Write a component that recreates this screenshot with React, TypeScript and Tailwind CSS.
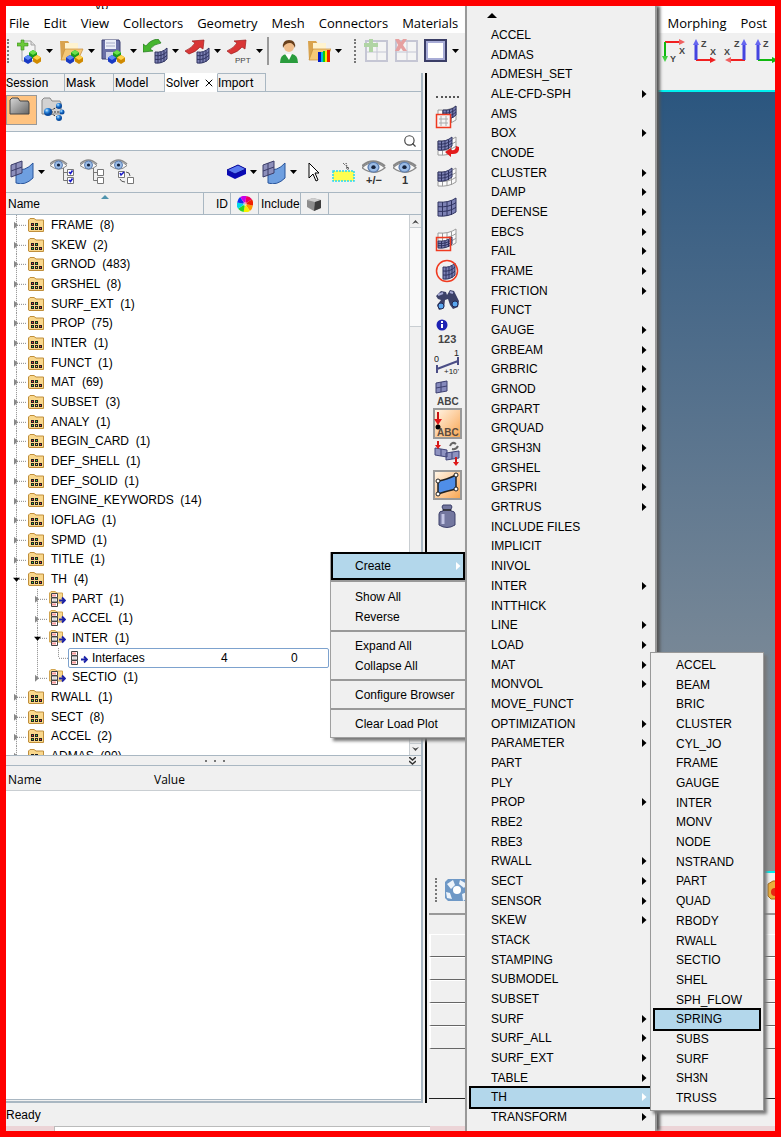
import React from "react";
import { Search, X } from "lucide-react";

type Kids = { children?: React.ReactNode };

/* ---------- shared drawing pieces ---------- */

function Svg({ w = 24, h = 24, children }: { w?: number; h?: number } & Kids) {
  return (
    <svg width={w} height={h} viewBox={`0 0 ${w} ${h}`} className="block shrink-0" aria-hidden="true">
      {children}
    </svg>
  );
}

function Caret() {
  return (
    <Svg w={7} h={4}>
      <path d="M0 0h7L3.5 4z" fill="#000" />
    </Svg>
  );
}

function Cube({ x, y, top, side }: { x: number; y: number; top: string; side: string }) {
  return (
    <g transform={`translate(${x} ${y})`}>
      <path d="M0 2.5 4 0l4 2.5v4L4 9 0 6.5z" fill={side} />
      <path d="M0 2.5 4 0l4 2.5L4 5z" fill={top} />
    </g>
  );
}

function Cubes() {
  return (
    <g>
      <Cube x={12} y={11} top="#6be04c" side="#1b9a1b" />
      <Cube x={7} y={16} top="#5f8cf5" side="#1839c4" />
      <Cube x={16} y={16} top="#ffd34a" side="#d08a00" />
    </g>
  );
}

function Mesh({ x = 0, y = 0, w = 18, h = 14, fill = "#7c81b4", line = "#2f3360" }: { x?: number; y?: number; w?: number; h?: number; fill?: string; line?: string }) {
  const d = (r: number) => `M0 ${4 + r} Q${w * 0.6} ${5 + r} ${w} ${r}`;
  return (
    <g transform={`translate(${x} ${y})`} stroke={line} strokeWidth="1" fill="none">
      <path d={`M0 4Q${w * 0.6} 5 ${w} 0V${h}Q${w * 0.6} ${h + 5} 0 ${h + 4}z`} fill={fill} />
      <path d={d(h / 3)} />
      <path d={d((2 * h) / 3)} />
      <path d={`M${w * 0.25} 4v${h}M${w * 0.5} 4v${h}M${w * 0.75} 3v${h}`} />
    </g>
  );
}

function Folder({ rainbow }: { rainbow?: boolean }) {
  return (
    <g>
      <path d="M1 2h8l2 3h8v16H2z" fill="#d9a34e" />
      <path d="M6 4h13v8H6z" fill="#fff3cf" />
      <path d="M2 21 6 10h18l-5 11z" fill="#f5c877" stroke="#c58d3a" strokeWidth=".7" />
      {rainbow && (
        <g>
          <path d="M11 13h3v10h-3z" fill="#0018c8" />
          <path d="M14 13h2v10h-2z" fill="#00b8e8" />
          <path d="M16 12h2v11h-2z" fill="#12c812" />
          <path d="M18 12h2v11h-2z" fill="#f6ee00" />
          <path d="M20 11h3v12h-3z" fill="#ee2200" />
        </g>
      )}
    </g>
  );
}

function NewIcon() {
  return (
    <Svg w={25} h={25}>
      <path d="M5 2h9l4 4v16H5z" fill="#f4f4f4" stroke="#a5a5a5" />
      <path d="M14 2v4h4" fill="#ddd" stroke="#a5a5a5" />
      <path d="M4 1h3v3h4v3H7v4H4V7H0V4h4z" fill="#6bc93a" stroke="#3a8c1d" strokeWidth=".6" />
      <Cubes />
    </Svg>
  );
}
function OpenIcon() {
  return (
    <Svg w={25} h={25}>
      <Folder />
      <Cubes />
    </Svg>
  );
}
function SaveIcon() {
  return (
    <Svg w={25} h={25}>
      <path d="M1 1h17l1 2v17H1z" fill="#6a6fa6" stroke="#3c4073" />
      <path d="M4 1h11v9H4z" fill="#eceef8" />
      <path d="M5 13h8v7H5z" fill="#cfd2e6" />
      <path d="M5 4h9M5 7h9" stroke="#a8acc9" />
      <Cubes />
    </Svg>
  );
}
function ImportIcon() {
  return (
    <Svg w={25} h={25}>
      <path d="M0 13V5l3 2Q7 1 15 0l3 4Q11 5 7 10l3 2z" fill="#45b52e" stroke="#20761a" strokeWidth=".7" />
      <Mesh x={12} y={9} w={12} h={11} />
    </Svg>
  );
}
function ExportIcon({ ppt }: { ppt?: boolean }) {
  return (
    <Svg w={25} h={25}>
      <path d="M0 12Q7 9 10 4L7 2l12-1-1 9-3-2Q11 13 4 15z" fill="#d93636" stroke="#9e1c1c" strokeWidth=".7" />
      {ppt ? (
        <text x="8" y="24" fontSize="8" fill="#444" className="font-['Liberation_Sans',sans-serif]">PPT</text>
      ) : (
        <Mesh x={12} y={9} w={12} h={11} />
      )}
    </Svg>
  );
}
function UserIcon() {
  return (
    <Svg w={20} h={25}>
      <path d="M1 24q0-8 6-9h6q6 1 6 9z" fill="#2a9c3d" />
      <path d="m6 15 4 6 3-6z" fill="#fff" />
      <circle cx="10" cy="8" r="5" fill="#f0bd8b" />
      <path d="M4 9Q3 1 10 1t6 8q-2-5-5-5-5 0-7 5z" fill="#69401c" />
    </Svg>
  );
}
function GridIcon({ kind }: { kind: "add" | "del" }) {
  return (
    <Svg>
      <g opacity=".45">
        <path d="M2 2h21v20H2z" fill="#fafafa" stroke="#9295b4" strokeWidth="2" />
        <path d="M13 2v20M2 13h21" stroke="#9295b4" />
        {kind === "add" ? (
          <path d="M5 0h4v4h5v4H9v5H5V8H0V4h5z" fill="#63b34a" />
        ) : (
          <path d="M1 0h4l2 3 2-3h4L9 6l4 6H9L7 9l-2 3H1l3-6z" fill="#dc4040" />
        )}
      </g>
    </Svg>
  );
}
function SquareIcon() {
  return (
    <Svg>
      <path d="M1 1h21v21H1z" fill="#fff" stroke="#3a3d66" strokeWidth="2" />
      <path d="M3 3h17v17H3z" fill="none" stroke="#a8acd6" strokeWidth="2" />
    </Svg>
  );
}

/* axis triads used by the view buttons */
function Axis({ kind }: { kind: "yx" | "zx" | "xz" | "zy" }) {
  const t = "font-['Liberation_Sans',sans-serif] font-bold";
  if (kind === "yx")
    return (
      <Svg>
        <path d="M3 3h16" stroke="#f02020" strokeWidth="2" />
        <path d="m17 0 6 3-6 3z" fill="#f06060" />
        <path d="M3 3v16" stroke="#10b810" strokeWidth="2" />
        <path d="m0 17 3 6 3-6z" fill="#40d040" />
        <text x="17" y="15" fontSize="9" fill="#444" className={t}>X</text>
        <text x="8" y="23" fontSize="9" fill="#444" className={t}>Y</text>
      </Svg>
    );
  if (kind === "xz")
    return (
      <Svg>
        <path d="M5 21h16" stroke="#f02020" strokeWidth="2" />
        <path d="m7 18-6 3 6 3z" fill="#f06060" />
        <path d="M20 21V5" stroke="#4444e0" strokeWidth="3" />
        <path d="m17 6 3-6 3 6z" fill="#6666f0" />
        <text x="10" y="8" fontSize="9" fill="#444" className={t}>Z</text>
        <text x="0" y="16" fontSize="9" fill="#444" className={t}>X</text>
      </Svg>
    );
  const color = kind === "zx" ? "#f02020" : "#10b810";
  return (
    <Svg>
      <path d="M3 21h16" stroke={color} strokeWidth="2" />
      <path d="m17 18 6 3-6 3z" fill={color} />
      <path d="M3 21V5" stroke="#4444e0" strokeWidth="3" />
      <path d="m0 6 3-6 3 6z" fill="#6666f0" />
      <text x="8" y="8" fontSize="9" fill="#444" className={t}>Z</text>
      {kind === "zx" && <text x="17" y="16" fontSize="9" fill="#444" className={t}>X</text>}
    </Svg>
  );
}

/* browser icons */
function GrayFolder({ nodes }: { nodes?: boolean }) {
  return (
    <Svg w={25} h={25}>
      <defs>
        <linearGradient id="gf" x1="0" y1="0" x2="1" y2="1">
          <stop offset="0" stopColor="#d8d8d8" />
          <stop offset="1" stopColor="#666" />
        </linearGradient>
        <radialGradient id="ball" cx=".35" cy=".3">
          <stop offset="0" stopColor="#cfeaff" />
          <stop offset=".5" stopColor="#2f8be0" />
          <stop offset="1" stopColor="#0a4ca0" />
        </radialGradient>
      </defs>
      <path d="M1 17V3l2-2h6l2 3h8l1 2v11z" fill={nodes ? "#d2d2d2" : "url(#gf)"} stroke={nodes ? "#888" : "#444"} />
      {nodes && (
        <g>
          <path d="m7 15 11-6M7 15h14M7 15l11 6" stroke="#333" strokeDasharray="2 1" />
          <circle cx="7" cy="15" r="4" fill="url(#ball)" />
          <circle cx="18" cy="9" r="3" fill="url(#ball)" />
          <circle cx="21" cy="15" r="2.5" fill="url(#ball)" />
          <circle cx="18" cy="21" r="3" fill="url(#ball)" />
        </g>
      )}
    </Svg>
  );
}
function SurfIcon() {
  return (
    <Svg>
      <path d="M6 9q9 3 17-6v15q-8 8-17 5z" fill="#6e9fe0" stroke="#28549b" />
      <path d="m1 5 11-4v12L1 17zM1 11l11-4M6 3v12" fill="#8d8fbb" stroke="#3b3d68" />
    </Svg>
  );
}
function Eye() {
  return (
    <g>
      <path d="M0 6.5Q8-2 17 6.5 9 14 0 6.5z" fill="#f7f7f7" stroke="#888" />
      <path d="M0 5Q8-3 17 5" fill="none" stroke="#888" strokeWidth="1.5" />
      <circle cx="8.5" cy="6" r="4" fill="#9bbce6" stroke="#5c7fb2" />
      <circle cx="8.5" cy="6" r="1.6" fill="#16233c" />
    </g>
  );
}
function EyeTree({ kind }: { kind: "checked" | "empty" | "swap" }) {
  return (
    <Svg w={25} h={25}>
      <Eye />
      {kind === "swap" ? (
        <g>
          <path d="M8.500 12.500h6v6h-6zM17.500 18.500h6v6h-6z" fill="#fff" stroke="#777" />
          <path d="m10 14 1 2 3-3" stroke="#1919c8" strokeWidth="1.5" fill="none" />
          <path d="M16 13q4 0 4 4M10 20q1 3 5 3" fill="none" stroke="#555" />
        </g>
      ) : (
        <g>
          <path d="M13.500 9v12.500H17M13.500 13.500H17" stroke="#777" fill="none" />
          <path d="M17.500 10.500h6v6h-6zM17.500 18.500h6v6h-6z" fill="#fff" stroke="#777" />
          {kind === "checked" && <path d="m19 13 1.500 1.500 2-3M19 21l1.500 1.500 2-3" stroke="#1919c8" strokeWidth="1.6" fill="none" />}
        </g>
      )}
    </Svg>
  );
}
function BigEye({ label }: { label: string }) {
  return (
    <Svg>
      <g transform="scale(1.35 1.2)">
        <Eye />
      </g>
      <text x="12" y="24" fontSize="11" textAnchor="middle" fill="#333" className="font-['Liberation_Sans',sans-serif] font-bold">{label}</text>
    </Svg>
  );
}
function BlueBox() {
  return (
    <Svg w={19} h={15}>
      <path d="m0 6 11-5 8 4v5L8 15 0 11z" fill="#0a0ab4" />
      <path d="m0 6 11-5 8 4L8 10z" fill="#5b7bf0" stroke="#0a0a9a" />
    </Svg>
  );
}
function Pointer() {
  return (
    <Svg w={12} h={20}>
      <path d="M1 1v15l4-4 3 7 2-1-3-7h4z" fill="#fff" stroke="#000" />
    </Svg>
  );
}
function Highlighter() {
  return (
    <Svg w={23} h={20}>
      <path d="M1 9h21v10H1z" fill="#ffff50" stroke="#27d7ee" strokeWidth="1.500" strokeDasharray="2 1" />
      <path d="m11 1 6 6m-3-6 2 7m1-2h-4" stroke="#333" strokeDasharray="1 1" />
    </Svg>
  );
}
function ColorWheel() {
  const hues = ["#ff9a00", "#f7f000", "#28d428", "#00d8e8", "#1030f0", "#c800e8", "#f00060", "#f02000"];
  const pts = [[8, 0], [14, 2], [16, 8], [14, 14], [8, 16], [2, 14], [0, 8], [2, 2], [8, 0]];
  return (
    <Svg w={16} h={16}>
      <g transform="rotate(100 8 8)">
        {hues.map((c, i) => (
          <path key={c} d={`M8 8L${pts[i][0]} ${pts[i][1]}A8 8 0 0 1 ${pts[i + 1][0]} ${pts[i + 1][1]}z`} fill={c} />
        ))}
      </g>
      <circle cx="8" cy="8" r="2" fill="#fff" opacity=".5" />
    </Svg>
  );
}
function GrayCube() {
  return (
    <Svg w={14} h={14}>
      <path d="M0 3 6 1l8 2v8l-7 3-7-4z" fill="#8d8d8d" />
      <path d="M0 3 6 1l8 2-6 2z" fill="#cfcfcf" />
      <path d="m8 5 6-2v8l-7 3z" fill="#3d3d3d" />
    </Svg>
  );
}
function TreeFolder() {
  return (
    <Svg w={16} h={14}>
      <path d="M.5 13V2L2 .5h4L8 2h7.5v11.5H1z" fill="#f9d78c" stroke="#c08f3c" />
      <path d="M3 5h3v3H3zM7 5h3v3H7zM3 9h3v3H3zM7 9h3v3H7zM11 9h3v3h-3z" fill="#222" />
      <path d="M4 6h1v1H4z" fill="#f33" />
      <path d="M8 6h1v1H8zM4 10h1v1H4z" fill="#4e4" />
      <path d="M8 10h1v1H8z" fill="#fe3" />
      <path d="M12 10h1v1h-1z" fill="#f33" />
    </Svg>
  );
}
function Blocks({ folder }: { folder?: boolean }) {
  return (
    <Svg w={17} h={16}>
      {folder && <path d="M.5 12V2L2 .5h4L8 2h5.5v10z" fill="#f8d98f" stroke="#d2a552" />}
      <g transform={folder ? "translate(2 2)" : "translate(0 1)"}>
        <path d="M.5.5h6v4h-6zM.5 5h6v4h-6zM.5 9.500h6v4h-6z" fill="#fff" stroke="#444" />
        <path d="M1.500 2.500h4M1.500 11.500h4" stroke="#e33" strokeWidth="2" strokeDasharray="1 1" />
        <path d="M1.500 7h4" stroke="#bbb" />
      </g>
      <path d="M10 9.500h5M13 6.500l3 3-3 3" stroke="#1b22a8" strokeWidth="1.800" fill="none" />
    </Svg>
  );
}

/* vertical display toolbar */
function Panel3D({ kind }: { kind: "box" | "back" | "part" | "full" | "lower" | "circle" }) {
  return (
    <Svg>
      {kind === "circle" ? (
        <g>
          <Mesh x={8} y={4} w={12} h={12} />
          <circle cx="12" cy="12" r="10.500" fill="none" stroke="#f03a20" strokeWidth="1.500" />
        </g>
      ) : (
        <g>
          {kind === "full" ? (
            <Mesh x={3} y={1} w={18} h={14} />
          ) : (
            <g>
              <Mesh x={3} y={1} w={18} h={14} fill="#fafafa" line="#9a9a9a" />
              {kind === "lower" ? <Mesh x={3} y={9} w={14} h={7} /> : <Mesh x={kind === "box" ? 8 : 3} y={1} w={kind === "box" ? 13 : 14} h={9} />}
            </g>
          )}
          {(kind === "box" || kind === "lower") && (
            <path d="M1.500 9.500h14v13h-14z" fill={kind === "box" ? "#f5f5f5" : "none"} stroke="#f03a20" strokeWidth="1.500" />
          )}
          {kind === "box" && <path d="M4 14h9M4 18h9M6 11v10M11 11v10" stroke="#aaa" />}
          {kind === "back" && <path d="M24 11q1 8-8 7v3l-6-5 6-4v2q5 1 5-4z" fill="#e31b1b" />}
        </g>
      )}
    </Svg>
  );
}
function Binoculars() {
  return (
    <Svg>
      <path d="M1 7 6 2l5 1 1 3 3-5 4 1 5 10-1 6-5 2-3-4-2-6-3 1-1 8-5 2-2-5 4-5-3-1z" fill="#3c4168" />
      <path d="m3 6 5-2M15 3l3 1" stroke="#a5a9d4" strokeWidth="2" />
      <circle cx="6" cy="17" r="3" fill="#5aa7f0" stroke="#222a55" />
      <circle cx="20" cy="15" r="3" fill="#5aa7f0" stroke="#222a55" />
    </Svg>
  );
}
const label3 = "font-['Liberation_Sans',sans-serif] font-black";
function Info123() {
  return (
    <Svg w={26} h={26}>
      <circle cx="8" cy="6" r="5.500" fill="#1d22b4" />
      <path d="M8 5v4M8 2v2" stroke="#fff" strokeWidth="2" />
      <text x="4" y="24" fontSize="11" fill="#444" className={label3}>123</text>
    </Svg>
  );
}
function Scale() {
  return (
    <Svg w={26} h={26}>
      <path d="M3 16v8M24 8v8M3 20 24 12" stroke="#4b4e86" strokeWidth="2" />
      <text x="0" y="13" fontSize="9" fill="#222">0</text>
      <text x="20" y="7" fontSize="9" fill="#222">1</text>
      <text x="10" y="25" fontSize="8" fill="#222">+10'</text>
    </Svg>
  );
}
function AbcMesh() {
  return (
    <Svg w={26} h={26}>
      <path d="m2 3 11-2v10L2 13zM2 8l11-2M7 2v10" fill="#8589bb" stroke="#3d4070" />
      <text x="3" y="25" fontSize="10" fill="#444" className={label3}>ABC</text>
    </Svg>
  );
}
function AbcArrow() {
  return (
    <Svg w={26} h={26}>
      <path d="M4 1v11" stroke="#c81414" strokeWidth="2" />
      <path d="M0 8h8l-4 6z" fill="#e01818" />
      <circle cx="4" cy="16" r="2.500" fill="#000" />
      <text x="3" y="25" fontSize="10" fill="#5a4a3e" className={label3}>ABC</text>
    </Svg>
  );
}
function MoveMesh() {
  return (
    <Svg w={26} h={26}>
      <path d="m1 7 12 2v7L1 14zM12 12l13-2v7l-13 2zM7 8v7M18 11v7" fill="#8e92c0" stroke="#41457a" />
      <path d="M4 0v6M22 16v7" stroke="#d01818" strokeWidth="2" />
      <path d="M1 4h6L4 8zM19 21h6l-3 4z" fill="#e01818" />
      <path d="M16 5q2-5 6-2M24 5q-2 4-6 3" fill="none" stroke="#666" strokeWidth="2" />
    </Svg>
  );
}
function BlueFace() {
  return (
    <Svg w={26} h={26}>
      <path d="M4 9Q12 8 22 3v14Q13 19 4 22z" fill="#4f8ee8" stroke="#222" strokeWidth="1.500" />
      <g fill="#fff" stroke="#222">
        <circle cx="4" cy="9" r="2" />
        <circle cx="22" cy="3" r="2" />
        <circle cx="22" cy="17" r="2" />
        <circle cx="4" cy="22" r="2" />
      </g>
    </Svg>
  );
}
function Weight() {
  return (
    <Svg>
      <path d="M8 1h8q2 2 0 4v2q4 0 4 3v11q-8 5-16 0V10q0-3 4-3V5Q6 3 8 1z" fill="#73779f" stroke="#3d406a" />
      <path d="M8 10v10" stroke="#c2c5e4" strokeWidth="3" />
      <path d="M8 6h8" stroke="#222" strokeWidth="1.500" />
    </Svg>
  );
}

/* ---------- data ---------- */

const menus = ["File", "Edit", "View", "Collectors", "Geometry", "Mesh", "Connectors", "Materials"];

const createItems =
  "ACCEL|ADMAS|ADMESH_SET|ALE-CFD-SPH>|AMS|BOX>|CNODE|CLUSTER>|DAMP>|DEFENSE>|EBCS>|FAIL>|FRAME>|FRICTION>|FUNCT|GAUGE>|GRBEAM>|GRBRIC>|GRNOD>|GRPART>|GRQUAD>|GRSH3N>|GRSHEL>|GRSPRI>|GRTRUS>|INCLUDE FILES|IMPLICIT|INIVOL|INTER>|INTTHICK|LINE>|LOAD>|MAT>|MONVOL>|MOVE_FUNCT|OPTIMIZATION>|PARAMETER>|PART|PLY|PROP>|RBE2|RBE3|RWALL>|SECT>|SENSOR>|SKEW>|STACK|STAMPING|SUBMODEL|SUBSET|SURF>|SURF_ALL>|SURF_EXT>|TABLE>|TH>|TRANSFORM>".split("|");

const thItems =
  "ACCEL|BEAM|BRIC|CLUSTER|CYL_JO|FRAME|GAUGE|INTER|MONV|NODE|NSTRAND|PART|QUAD|RBODY|RWALL|SECTIO|SHEL|SPH_FLOW|SPRING|SUBS|SURF|SH3N|TRUSS".split("|");

type Row = { name: string; count?: number; level?: 1 | 2; open?: boolean; last?: boolean };
const rows: Row[] = [
  { name: "FRAME", count: 8 }, { name: "SKEW", count: 2 }, { name: "GRNOD", count: 483 }, { name: "GRSHEL", count: 8 },
  { name: "SURF_EXT", count: 1 }, { name: "PROP", count: 75 }, { name: "INTER", count: 1 }, { name: "FUNCT", count: 1 },
  { name: "MAT", count: 69 }, { name: "SUBSET", count: 3 }, { name: "ANALY", count: 1 }, { name: "BEGIN_CARD", count: 1 },
  { name: "DEF_SHELL", count: 1 }, { name: "DEF_SOLID", count: 1 }, { name: "ENGINE_KEYWORDS", count: 14 }, { name: "IOFLAG", count: 1 },
  { name: "SPMD", count: 1 }, { name: "TITLE", count: 1 }, { name: "TH", count: 4, open: true },
  { name: "PART", count: 1, level: 1 }, { name: "ACCEL", count: 1, level: 1 }, { name: "INTER", count: 1, level: 1, open: true },
  { name: "Interfaces", level: 2 }, { name: "SECTIO", count: 1, level: 1, last: true },
  { name: "RWALL", count: 1 }, { name: "SECT", count: 8 }, { name: "ACCEL", count: 2 }, { name: "ADMAS", count: 90 },
];

/* ---------- parts ---------- */

function ToolButton({ label, caret, children }: { label: string; caret?: boolean } & Kids) {
  return (
    <button aria-label={label} className="flex shrink-0 items-center gap-1">
      {children}
      {caret && <Caret />}
    </button>
  );
}

function Grip() {
  return <div className="h-6 shrink-0 border-l-2 border-dotted border-[#777]" />;
}

function Guide({ half, elbow, expander, open }: { half?: boolean; elbow?: boolean; expander?: boolean; open?: boolean }) {
  return (
    <svg width="21" height="100%" viewBox="0 0 21 20" preserveAspectRatio="xMinYMid slice" className="block shrink-0" aria-hidden="true">
      <path d={elbow || half ? "M10.500 0v10" : "M10.500 0v20"} stroke="#888" strokeDasharray="1 1" />
      {(elbow || expander) && <path d="M11 10.500h10" stroke="#888" strokeDasharray="1 1" />}
      {expander && (open ? <path d="M7 9h7l-3.500 4z" fill="#000" /> : <path d="m8 7 4 3.500L8 14z" fill="#888" />)}
    </svg>
  );
}

function TreeRow({ row }: { row: Row }) {
  if (row.level === 2)
    return (
      <li className="flex min-h-0 items-stretch">
        <Guide />
        <Guide />
        <Guide elbow />
        <button className="-ml-px flex w-[261px] items-center rounded-xs border border-[#7da2ce] bg-white">
          <span className="flex w-[23px] pl-0.5"><Blocks /></span>
          <span className="w-[129px] text-left">{row.name}</span>
          <span className="w-[70px] text-left">4</span>
          <span>0</span>
        </button>
      </li>
    );
  return (
    <li className="flex min-h-0 items-stretch">
      {row.level === 1 && <Guide />}
      <Guide expander open={row.open} half={row.last} />
      <button className="flex items-center whitespace-pre">
        <span className="flex w-6 pl-px">{row.level === 1 ? <Blocks folder /> : <TreeFolder />}</span>
        <span>{`${row.name}  (${row.count})`}</span>
      </button>
    </li>
  );
}

function MenuArrow({ light }: { light?: boolean }) {
  return (
    <Svg w={5} h={8}>
      <path d="m0 0 4.500 4L0 8z" fill={light ? "#fff" : "#000"} />
    </Svg>
  );
}

function MenuRow({ text, active, pad }: { text: string; active?: boolean; pad: string }) {
  const sub = text.endsWith(">");
  return (
    <li className="flex min-h-0">
      <button className={`flex flex-1 items-center justify-between pr-1 ${pad} ${active ? "bg-[#b3d7eb] outline-2 outline-black" : ""}`}>
        <span>{text.replace(">", "")}</span>
        {sub && <MenuArrow light={active} />}
      </button>
    </li>
  );
}

function ContextRow({ children }: Kids) {
  return <button className="block h-5 w-full pl-6 text-left leading-5">{children}</button>;
}

function Browser() {
  const tab = "flex h-[19px] items-center border border-b-0 border-l-0 border-[#a9b7c2] whitespace-nowrap";
  return (
    <section className="flex w-[417px] shrink-0 flex-col border-r-2 border-[#a9b7c2]">
      <div className="flex h-[19px] shrink-0 border-b border-[#a9b7c2] font-[Roboto,sans-serif]">
        <button className={`${tab} w-[59px]`}>Session</button>
        <button className={`${tab} w-[49px] pl-px`}>Mask</button>
        <button className={`${tab} w-[51px] pl-px`}>Model</button>
        <button className={`${tab} w-[53px] gap-1 border-t-transparent bg-white pl-px`}>
          Solver
          <X size={12} />
        </button>
        <button className={`${tab} w-[48px]`}>Import</button>
      </div>
      <div className="flex h-[39px] shrink-0 items-start gap-1 pt-[3px]">
        <button aria-label="Folder view" className="flex h-[30px] w-[31px] border border-[#999] bg-[#ffc380] pt-px pl-0.5">
          <GrayFolder />
        </button>
        <button aria-label="Relation view" className="pt-0.5"><GrayFolder nodes /></button>
      </div>
      <label className="flex h-5 shrink-0 items-center border-y border-[#a9b7c2] bg-white pr-1">
        <input aria-label="Search" className="min-w-0 flex-1 outline-none" />
        <Search size={14} className="text-[#444]" />
      </label>
      <div className="flex h-[41px] shrink-0 items-center pr-1 pl-1">
        <ToolButton label="Surface filter" caret><SurfIcon /></ToolButton>
        <div className="flex gap-[5px] pl-[5px]">
          <ToolButton label="Show"><EyeTree kind="checked" /></ToolButton>
          <ToolButton label="Hide"><EyeTree kind="empty" /></ToolButton>
          <ToolButton label="Reverse"><EyeTree kind="swap" /></ToolButton>
        </div>
        <div className="ml-auto flex items-center gap-[7px]">
          <div className="flex gap-[5px]">
            <ToolButton label="Component" caret><BlueBox /></ToolButton>
            <ToolButton label="Elements" caret><SurfIcon /></ToolButton>
          </div>
          <div className="flex items-center gap-3 pl-1">
            <ToolButton label="Select"><Pointer /></ToolButton>
            <ToolButton label="Highlight"><Highlighter /></ToolButton>
          </div>
          <ToolButton label="Add or remove"><BigEye label="+/−" /></ToolButton>
          <ToolButton label="Isolate"><BigEye label="1" /></ToolButton>
        </div>
      </div>
      <div className="flex h-[23px] shrink-0 items-stretch border-y border-[#a9b7c2]">
        <div className="relative flex w-[198px] items-center border-r border-[#a9b7c2] pl-0.5">
          Name
          <div className="absolute top-0.5 left-[95px]">
            <Svg w={8} h={4}><path d="M0 4 4 0l4 4z" fill="#4f93ad" /></Svg>
          </div>
        </div>
        <div className="flex w-[27px] items-center justify-end border-r border-[#a9b7c2] pr-0.5">ID</div>
        <div className="flex w-[28px] items-center justify-center border-r border-[#a9b7c2]"><ColorWheel /></div>
        <div className="flex w-[42px] items-center border-r border-[#a9b7c2] pl-0.5">Include</div>
        <div className="flex w-[28px] items-center border-r border-[#a9b7c2] pl-1.5"><GrayCube /></div>
      </div>
      <div className="flex h-[540px] shrink-0 overflow-hidden bg-white">
        <ul className="grid h-[551px] flex-1 auto-rows-fr">
          {rows.map((r, i) => <TreeRow key={i} row={r} />)}
        </ul>
        <div className="flex w-[12px] flex-col border-l border-[#c9ced2] bg-[#f0f0f0]">
          <button aria-label="Scroll up" className="flex h-3 items-center justify-center"><Svg w={7} h={5}><path d="m0 5 3.500-4L7 5 3.500 3.500z" fill="#444" /></Svg></button>
          <div className="h-[100px] border-y border-[#c9ced2] bg-[#f9f9f9]" />
          <button aria-label="Scroll down" className="mt-auto flex h-3 items-center justify-center border-t border-[#c9ced2]"><Svg w={7} h={5}><path d="m0 0 3.500 4L7 0 3.500 1.500z" fill="#444" /></Svg></button>
        </div>
      </div>
      <div className="flex h-[11px] shrink-0 items-center justify-end border-y border-[#a9b7c2] pr-[5px]">
        <div className="mr-[184px] flex gap-[7px]">
          <i className="size-[2px] bg-[#777]" />
          <i className="size-[2px] bg-[#777]" />
          <i className="size-[2px] bg-[#777]" />
        </div>
        <Svg w={7} h={8}><path d="m0 0 3.500 3L7 0M0 4l3.500 3L7 4" fill="none" stroke="#333" strokeWidth="1.500" /></Svg>
      </div>
      <div className="flex-1 bg-white">
        <table className="w-full font-['Open_Sans',sans-serif]">
          <thead>
            <tr className="h-6 border-b border-[#c9ced2] bg-[#f0f0f0] text-left">
              <th className="w-[148px] p-0 pt-1 pl-0.5 font-normal">Name</th>
              <th className="p-0 pt-1 font-normal">Value</th>
            </tr>
          </thead>
        </table>
      </div>
      <div className="h-1 shrink-0 border-t border-b-2 border-[#a9b7c2]" />
    </section>
  );
}

function DisplayTools() {
  const on = "border-2 border-[#999] bg-linear-to-br from-[#fff4e4] to-[#f7a750]";
  const tools: [string, React.ReactNode, boolean?][] = [
    ["Mask", <Panel3D kind="box" />], ["Undo mask", <Panel3D kind="back" />], ["Unmask adjacent", <Panel3D kind="part" />],
    ["Unmask all", <Panel3D kind="full" />], ["Mask outside", <Panel3D kind="lower" />], ["Spherical clip", <Panel3D kind="circle" />],
    ["Find", <Binoculars />], ["Numbers", <Info123 />], ["Scale", <Scale />], ["Element labels", <AbcMesh />],
    ["Load labels", <AbcArrow />, true], ["Move", <MoveMesh />], ["Faces", <BlueFace />, true], ["Mass", <Weight />],
  ];
  return (
    <div className="flex w-10 shrink-0 flex-col items-center pt-[23px]">
      <div className="mb-1 w-[23px] border-t-2 border-dotted border-[#555]" />
      <div className="grid h-[429px] auto-rows-fr">
        {tools.map(([name, icon, active]) => (
          <button key={name} aria-label={name} className={`flex w-[29px] items-center justify-center ${active ? on : ""}`}>{icon}</button>
        ))}
      </div>
    </div>
  );
}

function CommandPanel() {
  return (
    <div className="flex h-[230px] shrink-0 flex-col pl-0.5">
      <div className="flex h-[42px] items-center justify-between border-b-2 border-[#999] pb-1.5 pl-[6px]">
        <div className="flex items-center gap-2">
          <Grip />
          <button aria-label="Lattice">
            <Svg>
              <path d="M3 1h18l3 3v16l-3 3H3l-3-3V4z" fill="#6e98c6" />
              <path d="m2 6 6-4 2 5-4 4zM15 2l7 4-3 4-5-4zM1 14l4 1 2 6-5-1zM17 16l5-2 1 6-5 3z" fill="#edf3fa" />
              <circle cx="12" cy="12" r="4" fill="#fff" />
            </Svg>
          </button>
        </div>
        <button aria-label="Collector" className="w-2 overflow-hidden">
          <Svg w={20} h={20}>
            <path d="M1 4 6 1h12v18H4l-3-3z" fill="#ebae3c" stroke="#a66b13" />
            <circle cx="8" cy="12" r="4" fill="#e52714" />
          </Svg>
        </button>
      </div>
      <div className="h-[19px]" />
      {[0, 1, 2, 3, 4].map((n) => (
        <div key={n} className="h-[23px] border-t border-b border-l-2 border-t-white border-b-[#666] border-l-white" />
      ))}
      <div className="mb-1 flex-1 border-b border-[#222]" />
    </div>
  );
}

export default function App() {
  return (
    <div className="flex h-screen min-h-[1000px] bg-white pr-px pb-px">
      <div className="relative flex min-w-0 flex-1 flex-col overflow-hidden border-6 border-[#ff0000] bg-[#f0f0f0] font-['Liberation_Sans',sans-serif] text-xs text-black">
        <header className="shrink-0 bg-white font-['Open_Sans',sans-serif]">
          <div className="flex h-[3px] items-end overflow-hidden pl-[89px]">
            <span className="leading-[7px]">yp</span>
          </div>
          <nav className="flex h-6 items-center gap-[14px] pt-1.5 pr-2 pl-[3px] text-[13px]">
            {menus.map((m) => <button key={m}>{m}</button>)}
            <button className="ml-auto">Morphing</button>
            <button>Post</button>
          </nav>
        </header>

        <div className="flex h-10 shrink-0 items-center pb-1 pl-[1px]">
          <Grip />
          <div className="flex gap-[6px] pl-[8px]">
            <ToolButton label="New" caret><NewIcon /></ToolButton>
            <ToolButton label="Open" caret><OpenIcon /></ToolButton>
            <ToolButton label="Save" caret><SaveIcon /></ToolButton>
            <ToolButton label="Import" caret><ImportIcon /></ToolButton>
            <ToolButton label="Export" caret><ExportIcon /></ToolButton>
            <ToolButton label="Publish" caret><ExportIcon ppt /></ToolButton>
          </div>
          <div className="mr-[10px] ml-[4px] h-7 w-0.5 bg-[#999]" />
          <div className="flex items-center gap-2">
            <ToolButton label="User profile"><UserIcon /></ToolButton>
            <ToolButton label="Load results" caret><Svg><Folder rainbow /></Svg></ToolButton>
            <div className="ml-1 flex"><Grip /></div>
            <div className="flex gap-[6px]">
              <ToolButton label="Add panel"><GridIcon kind="add" /></ToolButton>
              <ToolButton label="Delete panel"><GridIcon kind="del" /></ToolButton>
              <ToolButton label="Layout" caret><SquareIcon /></ToolButton>
            </div>
          </div>
          <div className="-mr-1 ml-auto flex gap-[7px]">
            <ToolButton label="Top view"><Axis kind="yx" /></ToolButton>
            <ToolButton label="Front view"><Axis kind="zx" /></ToolButton>
            <ToolButton label="Rear view"><Axis kind="xz" /></ToolButton>
            <ToolButton label="Left view"><Axis kind="zy" /></ToolButton>
          </div>
        </div>

        <main className="flex min-h-0 flex-1">
          <Browser />
          <div className="ml-[2px] w-0.5 shrink-0 bg-black" />
          <div className="flex min-w-0 flex-1 flex-col">
            <div className="flex min-h-0 flex-1">
              <DisplayTools />
              <div className="mt-[17px] flex-1 border-y-2 border-[#00f0f0] bg-linear-to-b from-[#2b567f] via-[#758696] via-70% to-[#929292]" />
            </div>
            <CommandPanel />
          </div>
        </main>

        <footer className="shrink-0">
          <div className="flex h-[23px] items-center">Ready</div>
          <div className="flex h-[5px]">
            <div className="w-12 bg-[#ecd4d7]" />
            <div className="w-[376px] border-t border-l border-[#bbb] bg-white" />
            <div className="flex-1 bg-[#ecd4d7]" />
          </div>
        </footer>

        <div role="menu" className="absolute top-[546px] left-[324px] w-[137px] border border-t-0 border-[#a0a0a0] bg-[#f0f0f0] pb-[3px] shadow-[3px_3px_3px_#777]">
          <button className="flex h-7 w-[134px] items-center justify-between border-2 border-black bg-[#b3d7eb] pr-0.5 pl-[22px]">
            Create
            <MenuArrow light />
          </button>
          <div className="border-t-2 border-[#999] pt-[5px] pb-[3px]">
            <ContextRow>Show All</ContextRow>
            <ContextRow>Reverse</ContextRow>
          </div>
          <div className="border-t-2 border-[#999] pt-1 pb-[3px]">
            <ContextRow>Expand All</ContextRow>
            <ContextRow>Collapse All</ContextRow>
          </div>
          <div className="border-t-2 border-[#999] pt-1 pb-[3px]">
            <ContextRow>Configure Browser</ContextRow>
          </div>
          <div className="border-t-2 border-[#999] pt-1">
            <ContextRow>Clear Load Plot</ContextRow>
          </div>
        </div>

        <div role="menu" className="absolute inset-y-0 left-[459px] flex w-[192px] flex-col border-x-2 border-[#999] bg-[#f0f0f0] pb-1 shadow-[3px_0_3px_#555]">
          <button aria-label="Scroll menu up" className="flex h-[19px] items-center pl-[20px]">
            <Svg w={10} h={5}><path d="M0 5 5 0l5 5z" fill="#000" /></Svg>
          </button>
          <ul className="grid min-h-0 flex-1 auto-rows-fr px-1">
            {createItems.map((t) => <MenuRow key={t} text={t} active={t === "TH>"} pad="pl-5" />)}
          </ul>
        </div>

        <div role="menu" className="absolute bottom-[20px] left-[644px] flex h-[459px] w-[114px] flex-col border border-[#999] bg-[#f0f0f0] py-0.5 shadow-[3px_3px_3px_#777]">
          <ul className="grid min-h-0 flex-1 auto-rows-fr px-1">
            {thItems.map((t) => <MenuRow key={t} text={t} active={t === "SPRING"} pad="pl-[21px]" />)}
          </ul>
        </div>
      </div>
    </div>
  );
}
